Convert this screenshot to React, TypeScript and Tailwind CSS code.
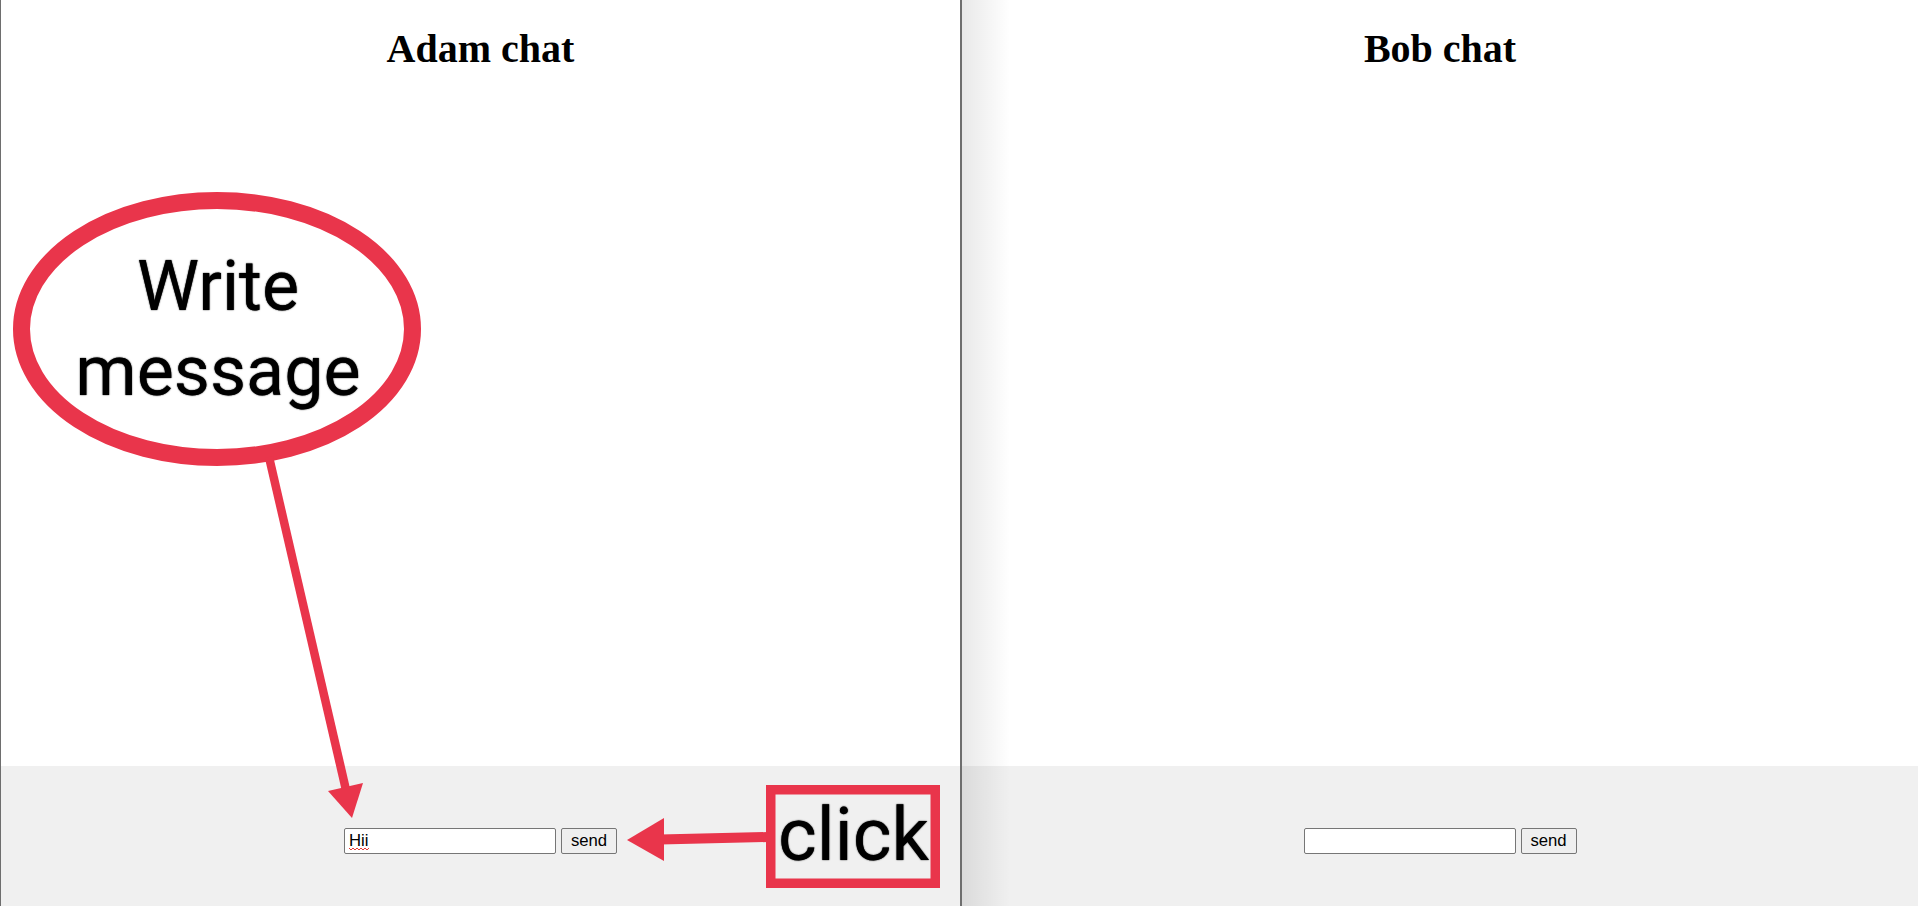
import React from "react";

const RED = "#e9354b";

function ChatPanel({
  title,
  value,
  squiggle,
  className,
  children,
}: {
  title: string;
  value: string;
  squiggle?: boolean;
  className: string;
  children?: React.ReactNode;
}) {
  return (
    <div className={"relative flex flex-col h-[906px] " + className}>
      <h1 className="mt-[27px] text-center text-[40px] font-bold leading-[44px] text-black [font-family:'Liberation_Serif','Times_New_Roman',serif]">
        {title}
      </h1>
      <div className="flex-1" />
      <div className="h-[140px] bg-[#f0f0f0] flex justify-center items-start pt-[62px] gap-[5px] [font-family:'Liberation_Sans',Arial,sans-serif]">
        <div className="relative">
          <input
            readOnly
            value={value}
            className="block w-[212px] h-[26px] bg-white border border-[#767676] rounded-[2px] px-[4px] text-[16.7px] text-black outline-none [font-family:'Liberation_Sans',Arial,sans-serif]"
          />
          {squiggle && (
            <svg
              className="absolute left-[5px] top-[19px] pointer-events-none"
              width="20"
              height="4"
              viewBox="0 0 20 4"
            >
              <path
                d="M0 1 L2 3 L4 1 L6 3 L8 1 L10 3 L12 1 L14 3 L16 1 L18 3 L20 1"
                fill="none"
                stroke="#e53935"
                strokeWidth="1"
              />
            </svg>
          )}
        </div>
        <button className="w-[56px] h-[26px] bg-[#efefef] border border-[#767676] rounded-[2px] text-[16.7px] text-black leading-none [font-family:'Liberation_Sans',Arial,sans-serif]">
          send
        </button>
      </div>
      {children}
    </div>
  );
}

export default function App() {
  return (
    <div className="relative w-[1918px] h-[906px] overflow-hidden bg-white flex">
      <ChatPanel
        title="Adam chat"
        value="Hii"
        squiggle
        className="w-[961px] border-l border-r border-[#6e6e6e]"
      />
      <ChatPanel
        title="Bob chat"
        value=""
        className="flex-1 border-l border-[#6e6e6e]"
      >
        <div className="absolute left-0 top-0 h-full w-[48px] pointer-events-none bg-gradient-to-r from-black/[0.09] to-transparent" />
      </ChatPanel>

      {/* Annotation texts */}
      <div className="absolute left-0 top-[244px] w-[436px] text-center text-[70px] leading-[85px] text-black [font-family:Roboto,'Noto_Sans',sans-serif] [text-shadow:0_0_1px_rgba(0,0,0,0.9),0_0_2px_rgba(0,0,0,0.4)] pointer-events-none">
        <div>Write</div>
        <div>message</div>
      </div>
      <div className="absolute left-[778px] top-[798px] text-[74px] leading-[74px] text-black [font-family:Roboto,'Noto_Sans',sans-serif] [text-shadow:0_0_1px_rgba(0,0,0,0.9),0_0_2px_rgba(0,0,0,0.4)] pointer-events-none">
        click
      </div>

      {/* Annotation drawings */}
      <svg
        className="absolute left-0 top-0 pointer-events-none"
        width="1918"
        height="906"
        viewBox="0 0 1918 906"
      >
        <ellipse
          cx="217"
          cy="329"
          rx="195.5"
          ry="128.5"
          fill="none"
          stroke={RED}
          strokeWidth="17"
        />
        <line x1="269" y1="457" x2="346" y2="790" stroke={RED} strokeWidth="8.5" />
        <polygon points="328,791 363,783 352,818" fill={RED} />
        <line x1="768" y1="837" x2="660" y2="839.5" stroke={RED} strokeWidth="10" />
        <polygon points="627,840 664,818 664,861" fill={RED} />
        <rect
          x="770.75"
          y="789.75"
          width="164.5"
          height="93.5"
          fill="none"
          stroke={RED}
          strokeWidth="9.5"
        />
      </svg>
    </div>
  );
}
